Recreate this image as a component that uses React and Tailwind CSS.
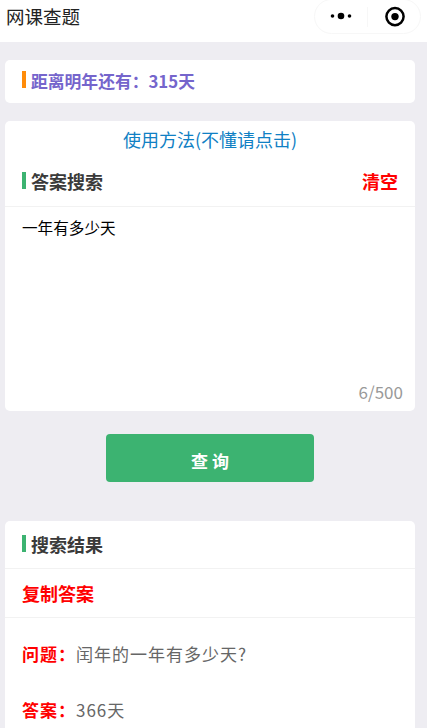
import { useState } from "react";

const MAX_LENGTH = 500;

const results = [
  { label: "问题：", text: "闰年的一年有多少天?" },
  { label: "答案：", text: "366天" },
];

function SectionTitle({ children }) {
  return (
    <div className="flex items-center">
      <span className="w-1 h-[17px] mr-[5px] mb-0.5 bg-[#3cb371]" />
      <h2 className="text-lg leading-6 font-bold text-[#3a3a3a]">{children}</h2>
    </div>
  );
}

function Capsule() {
  return (
    <div className="flex items-center w-[107px] h-[35px] -mt-px border border-[#f7f7f7] rounded-full">
      <button className="w-[52px] pb-px flex justify-center" aria-label="更多">
        <svg width="22" height="8" viewBox="0 0 22 8" fill="#000">
          <circle cx="2.5" cy="4" r="1.8" />
          <circle cx="11" cy="4" r="3.3" />
          <circle cx="19.5" cy="4" r="1.8" />
        </svg>
      </button>
      <span className="w-px h-5 bg-[#f7f7f7]" />
      <button className="flex-1 flex justify-center" aria-label="关闭">
        <svg width="22" height="22" viewBox="0 0 22 22">
          <circle cx="12" cy="10.6" r="8.6" fill="none" stroke="#000" strokeWidth="2.5" />
          <circle cx="12" cy="10.6" r="3.7" fill="#000" />
        </svg>
      </button>
    </div>
  );
}

export default function App() {
  const [question, setQuestion] = useState("一年有多少天");

  return (
    <div className="h-screen overflow-hidden flex flex-col bg-[#eeedf2] font-['Noto_Sans_CJK_SC',sans-serif]">
      <header className="flex justify-between items-start h-[42px] shrink-0 pl-1.5 pr-[6px] bg-white">
        <h1 className="pt-1 text-[18.5px] leading-6 text-[#222]">网课查题</h1>
        <Capsule />
      </header>

      <main className="flex flex-col flex-1 min-h-0 pl-[5px] pr-3">
        <section className="flex items-center h-[43px] shrink-0 mt-[17.5px] pl-[17px] bg-white rounded-[5px]">
          <span className="w-1 h-[17px] mr-[5px] mb-[3px] bg-[#ff8c0a]" />
          <p className="text-[16.8px] leading-6 font-bold text-[#7565cc]">
            距离明年还有：315天
          </p>
        </section>

        <section className="flex flex-col h-[290px] shrink-0 mt-[18px] bg-white rounded-[5px]">
          <a
            href="#help"
            className="self-center pt-1.5 text-lg leading-6 text-[#1080c4]"
          >
            使用方法(不懂请点击)
          </a>
          <div className="flex justify-between items-center h-14 px-[17px] pt-1.5 border-b border-[#f2f2f2]">
            <SectionTitle>答案搜索</SectionTitle>
            <button
              onClick={() => setQuestion("")}
              className="text-lg leading-6 font-bold text-[#f00]"
            >
              清空
            </button>
          </div>
          <textarea
            value={question}
            maxLength={MAX_LENGTH}
            spellCheck={false}
            onChange={(e) => setQuestion(e.target.value)}
            className="flex-1 px-[17px] pt-2 text-[15.6px] leading-6 text-black resize-none outline-none"
          />
          <div className="pr-3 pb-[7px] text-right text-[17px] leading-6 text-[#999]">
            {question.length}/{MAX_LENGTH}
          </div>
        </section>

        <button className="w-[208px] h-12 shrink-0 mt-[23px] ml-[101px] pt-1.5 bg-[#3cb371] rounded-[4px] text-[17px] leading-6 font-bold text-white">
          查 询
        </button>

        <section className="flex-1 min-h-0 mt-[39px] bg-white rounded-t-[5px]">
          <div className="flex items-center h-12 pl-[17px] border-b border-[#f2f2f2]">
            <SectionTitle>搜索结果</SectionTitle>
          </div>
          <div className="flex items-center h-[49px] pl-[17px] border-b border-[#f2f2f2]">
            <button className="text-lg leading-6 font-bold text-[#f00]">
              复制答案
            </button>
          </div>
          <div className="flex flex-col gap-8 pt-6 pl-[17px] text-[17px] leading-6 tracking-[1px] text-[#666]">
            {results.map((r) => (
              <p key={r.label}>
                <span className="font-bold text-[#f00]">{r.label}</span>
                {r.text}
              </p>
            ))}
          </div>
        </section>
      </main>
    </div>
  );
}
